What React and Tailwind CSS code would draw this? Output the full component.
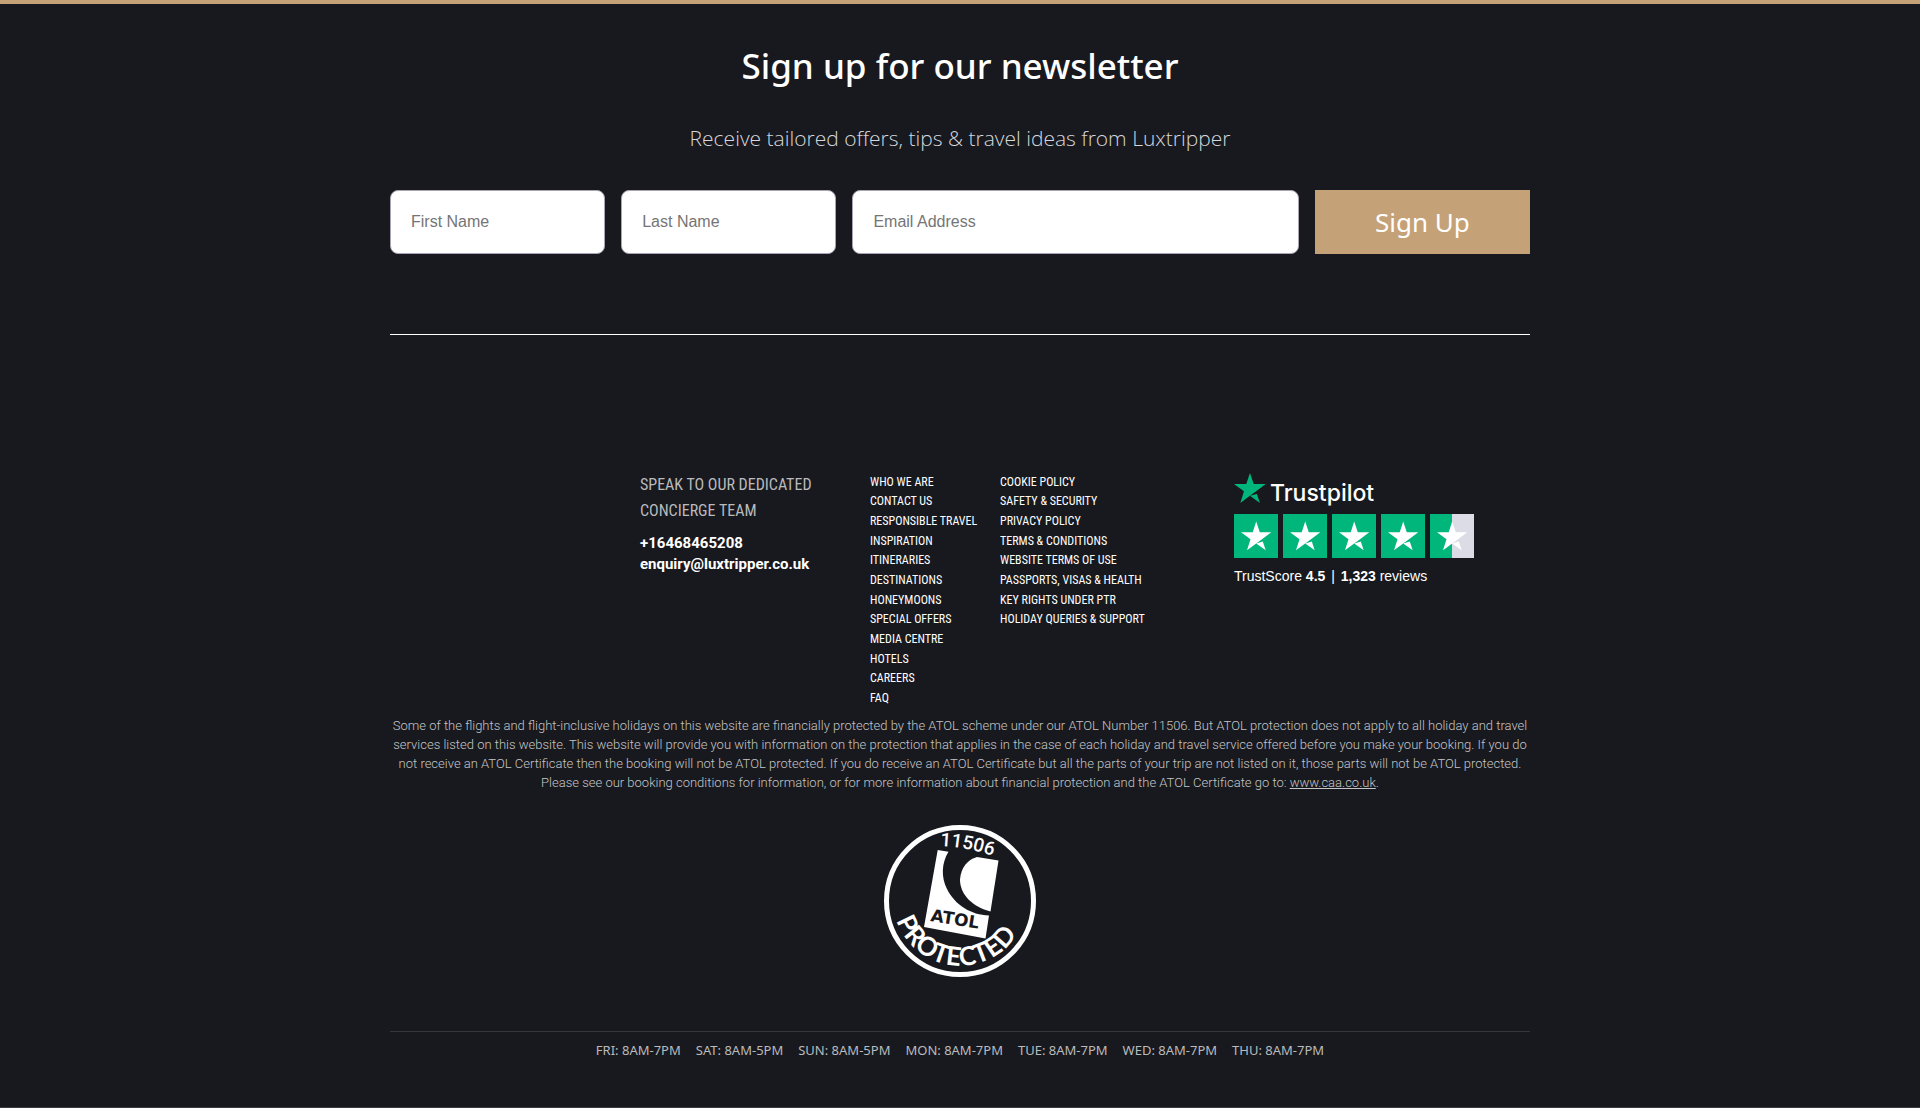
import { useId } from "react";

const companyLinks = [
  "Who we are",
  "Contact us",
  "Responsible travel",
  "Inspiration",
  "Itineraries",
  "Destinations",
  "Honeymoons",
  "Special offers",
  "Media centre",
  "Hotels",
  "Careers",
  "FAQ",
];

const policyLinks = [
  "Cookie policy",
  "Safety & security",
  "Privacy policy",
  "Terms & conditions",
  "Website terms of use",
  "Passports, visas & health",
  "Key rights under PTR",
  "Holiday queries & support",
];

const openingHours = [
  "Fri: 8am-7pm",
  "Sat: 8am-5pm",
  "Sun: 8am-5pm",
  "Mon: 8am-7pm",
  "Tue: 8am-7pm",
  "Wed: 8am-7pm",
  "Thu: 8am-7pm",
];

const fieldClass =
  "h-16 w-full rounded-lg border border-[#a9a4b4] bg-white px-5 font-['Liberation_Sans',sans-serif] text-base text-gray-800 placeholder:text-[#757575]";

const Star = ({ fill }) => (
  <g fill={fill}>
    <path d="M22.2 7.6 25.8 18.3H37.3L28 25.2 22.2 29.5 13 36.3 16.5 25.2 7 18.3H18.7Z" />
    <path d="M22.2 29.5 28.8 27.6 31.7 36.3Z" />
  </g>
);

const RatingBox = ({ half }) => (
  <svg viewBox="0 0 44 44" className="size-11" aria-hidden="true">
    <rect width="44" height="44" fill="#dcdce6" />
    <rect width={half ? 22 : 44} height="44" fill="#00b67a" />
    <Star fill="#fff" />
  </svg>
);

const LinkList = ({ links, label }) => (
  <nav aria-label={label}>
    <ul className="grid h-59 grid-rows-12 items-center font-['Roboto_Condensed','Roboto',sans-serif] text-xs leading-4 uppercase whitespace-nowrap">
      {links.map((link) => (
        <li key={link}>
          <a href="#" className="hover:underline">
            {link}
          </a>
        </li>
      ))}
    </ul>
  </nav>
);

const AtolBadge = () => {
  const arcId = useId();
  const topId = useId();
  return (
    <svg viewBox="0 0 154 154" className="size-[154px]" role="img" aria-label="ATOL Protected 11506">
      <defs>
        <path id={arcId} d="M10 72A67.200 67.200 0 0 0 143 88" />
        <path id={topId} d="M57 22Q86 23 116 34" />
      </defs>
      <circle cx="77" cy="77" r="73.500" fill="none" stroke="#fff" strokeWidth="5" />
      <path fill="#fff" d="M54.700 26 65.500 27.700C58.500 39 58 53 64 65C72 81 88 91 106 91.500L102.500 114.500 41 103Z" />
      <path fill="#fff" d="M115.500 36.500 107.500 87.500C90 83 77 71 77 55.500C78 43 85 35.500 94 33Z" />
      <text transform="translate(47 97) rotate(9)" fontSize="17" fontWeight="700" fill="#18191e" fontFamily="DejaVu Sans, sans-serif">
        ATOL
      </text>
      <text fontSize="19" fontWeight="500" fill="#fff" fontFamily="Roboto, sans-serif">
        <textPath href={`#${topId}`}>11506</textPath>
      </text>
      <text fontSize="26" fontWeight="700" fill="#fff" fontFamily="Lato, sans-serif" textAnchor="middle">
        <textPath href={`#${arcId}`} startOffset="50%">PROTECTED</textPath>
      </text>
    </svg>
  );
};

const Newsletter = () => (
  <section className="border-b border-white pb-20 text-center">
    <h2 className="pt-9 font-['Noto_Sans',sans-serif] text-[35px] leading-[52px] font-medium">
      Sign up for our newsletter
    </h2>
    <p className="pt-[30px] font-['Open_Sans',sans-serif] text-[21px] leading-8 font-light text-[#d6d7dc]">
      Receive tailored offers, tips & travel ideas from Luxtripper
    </p>
    <form
      onSubmit={(e) => e.preventDefault()}
      className="mt-9 grid grid-cols-1 gap-4 md:grid-cols-[215fr_215fr_446fr_215fr]"
    >
      <input type="text" placeholder="First Name" aria-label="First Name" className={fieldClass} />
      <input type="text" placeholder="Last Name" aria-label="Last Name" className={fieldClass} />
      <input type="email" placeholder="Email Address" aria-label="Email Address" className={fieldClass} />
      <button type="submit" className="h-16 bg-[#c4a177] font-['Noto_Sans',sans-serif] text-[26px]">
        Sign Up
      </button>
    </form>
  </section>
);

const Trustpilot = () => (
  <a href="#" className="block font-['Liberation_Sans',sans-serif]">
    <span className="flex items-start gap-1 font-['Inter',sans-serif] text-[23px] leading-[42px] font-medium">
      <svg viewBox="7 7 30.500 30" className="size-8" aria-hidden="true">
        <Star fill="#00b67a" />
      </svg>
      Trustpilot
    </span>
    <span className="flex gap-[5px]">
      {[1, 2, 3, 4, 5].map((n) => (
        <RatingBox key={n} half={n === 5} />
      ))}
    </span>
    <span className="mt-2 block text-sm leading-5">
      TrustScore <b>4.5</b> <span className="mx-0.5">|</span> <b>1,323</b> reviews
    </span>
  </a>
);

const App = () => {
  return (
    <footer className="border-t-4 border-b border-t-[#c4a177] border-b-[#3c3d41] bg-[#18191e] text-white">
      <div className="mx-auto max-w-[1140px]">
        <Newsletter />

        <div className="grid pt-[137px] md:grid-cols-[230px_130px_234px_1fr] lg:pl-[250px]">
          <div>
            <h3 className="font-['Roboto_Condensed','Roboto',sans-serif] text-base leading-[26px] text-[#babbbd]">
              SPEAK TO OUR DEDICATED
              <br />
              CONCIERGE TEAM
            </h3>
            <p className="pt-[9px] font-['Roboto',sans-serif] text-[15px] leading-[21px] font-bold">
              <a href="tel:+16468465208">+16468465208</a>
              <br />
              <a href="mailto:enquiry@luxtripper.co.uk">enquiry@luxtripper.co.uk</a>
            </p>
          </div>
          <LinkList links={companyLinks} label="Company" />
          <LinkList links={policyLinks} label="Policies" />
          <Trustpilot />
        </div>

        <p className="pt-2 text-center font-['Roboto',sans-serif] text-[13px] leading-[19px] font-light text-[#c4c5c7]">
          Some of the flights and flight-inclusive holidays on this website are financially protected by the ATOL
          scheme under our ATOL Number 11506. But ATOL protection does not apply to all holiday and travel services
          listed on this website. This website will provide you with information on the protection that applies in
          the case of each holiday and travel service offered before you make your booking. If you do not receive an
          ATOL Certificate then the booking will not be ATOL protected. If you do receive an ATOL Certificate but all
          the parts of your trip are not listed on it, those parts will not be ATOL protected. Please see our booking
          conditions for information, or for more information about financial protection and the ATOL Certificate go
          to:{" "}
          <a href="https://www.caa.co.uk" className="underline">
            www.caa.co.uk
          </a>
          .
        </p>

        <div className="flex justify-center pt-8 pb-[53px]">
          <AtolBadge />
        </div>

        <ul className="flex flex-wrap justify-center gap-x-[15px] border-t border-[#36373b] pt-1.5 pb-[45px] font-['Noto_Sans',sans-serif] text-[13px] leading-6 text-[#babbbd] uppercase">
          {openingHours.map((day) => (
            <li key={day}>{day}</li>
          ))}
        </ul>
      </div>
    </footer>
  );
};

export default App;
